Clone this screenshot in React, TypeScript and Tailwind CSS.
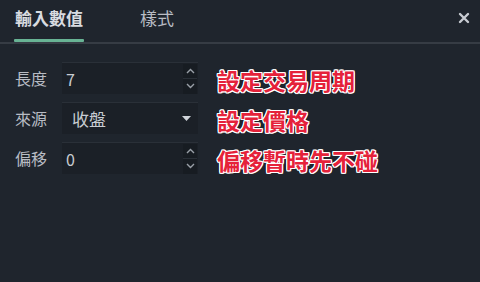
import React from "react";

const font = { fontFamily: '"Noto Sans CJK TC", "Noto Sans", sans-serif' };

function Spinner() {
  return (
    <div className="flex flex-col w-[14px] h-full">
      <div className="flex-1 flex items-center justify-center bg-[#171c22]">
        <svg width="9" height="6" viewBox="0 0 9 6"><path d="M1 5 L4.5 1.5 L8 5" stroke="#9aa0a8" strokeWidth="1.4" fill="none" /></svg>
      </div>
      <div className="h-[1px] bg-[#2a3038]" />
      <div className="flex-1 flex items-center justify-center bg-[#171c22]">
        <svg width="9" height="6" viewBox="0 0 9 6"><path d="M1 1 L4.5 4.5 L8 1" stroke="#9aa0a8" strokeWidth="1.4" fill="none" /></svg>
      </div>
    </div>
  );
}

function Note({ children }: { children: React.ReactNode }) {
  return (
    <div
      className="text-[23px] font-bold leading-none text-[#e5223a] [text-shadow:1px_0_#fff,-1px_0_#fff,0_1px_#fff,0_-1px_#fff,1px_1px_#fff,-1px_-1px_#fff,1px_-1px_#fff,-1px_1px_#fff]"
    >
      {children}
    </div>
  );
}

export default function App() {
  return (
    <div className="w-[480px] h-[282px] bg-[#1f252d] overflow-hidden" style={font}>
      <div className="h-[44px] flex items-start border-b-2 border-[#363c44] relative">
        <div className="ml-[14px] w-[70px] h-[42px] flex flex-col items-center">
          <div className="mt-[8px] text-[17px] font-bold leading-[20px] text-[#d8dbe0]">輸入數值</div>
          <div className="mt-auto w-[70px] h-[3px] bg-[#68b394] rounded-[1px]" />
        </div>
        <div className="ml-[56px] mt-[8px] text-[17px] leading-[20px] text-[#b8bcc4]">樣式</div>
        <div className="ml-auto mr-[10px] mt-[12px]">
          <svg width="12" height="12" viewBox="0 0 12 12">
            <path d="M2 2 L10 10 M10 2 L2 10" stroke="#c8ccd2" strokeWidth="2.4" strokeLinecap="round" />
          </svg>
        </div>
      </div>
      <div className="flex pt-[18px]">
        <div className="flex flex-col gap-[8px] w-[200px]">
          <div className="flex items-center h-[32px]">
            <div className="w-[48px] pl-[15px] text-[16px] text-[#b8bcc4] leading-none">長度</div>
            <div className="ml-[14px] w-[136px] h-[32px] bg-[#1b2027] border-t border-[#2a3038] flex items-center">
              <div className="flex-1 pl-[4px] text-[16px] text-[#c8ccd2]">7</div>
              <div className="h-[30px] pr-[1px]"><Spinner /></div>
            </div>
          </div>
          <div className="flex items-center h-[32px]">
            <div className="w-[48px] pl-[15px] text-[16px] text-[#b8bcc4] leading-none">來源</div>
            <div className="ml-[14px] w-[136px] h-[32px] bg-[#1b2027] border-t border-[#2a3038] flex items-center">
              <div className="flex-1 pl-[10px] text-[17px] text-[#c8ccd2]">收盤</div>
              <svg className="mr-[7px]" width="9" height="5" viewBox="0 0 9 5"><path d="M0 0 L9 0 L4.5 5 Z" fill="#d0d4da" /></svg>
            </div>
          </div>
          <div className="flex items-center h-[32px]">
            <div className="w-[48px] pl-[15px] text-[16px] text-[#b8bcc4] leading-none">偏移</div>
            <div className="ml-[14px] w-[136px] h-[32px] bg-[#1b2027] border-t border-[#2a3038] flex items-center">
              <div className="flex-1 pl-[4px] text-[16px] text-[#c8ccd2]">0</div>
              <div className="h-[30px] pr-[1px]"><Spinner /></div>
            </div>
          </div>
        </div>
        <div className="ml-[17px] flex flex-col pt-[7px] gap-[17px]">
          <Note>設定交易周期</Note>
          <Note>設定價格</Note>
          <Note>偏移暫時先不碰</Note>
        </div>
      </div>
    </div>
  );
}
